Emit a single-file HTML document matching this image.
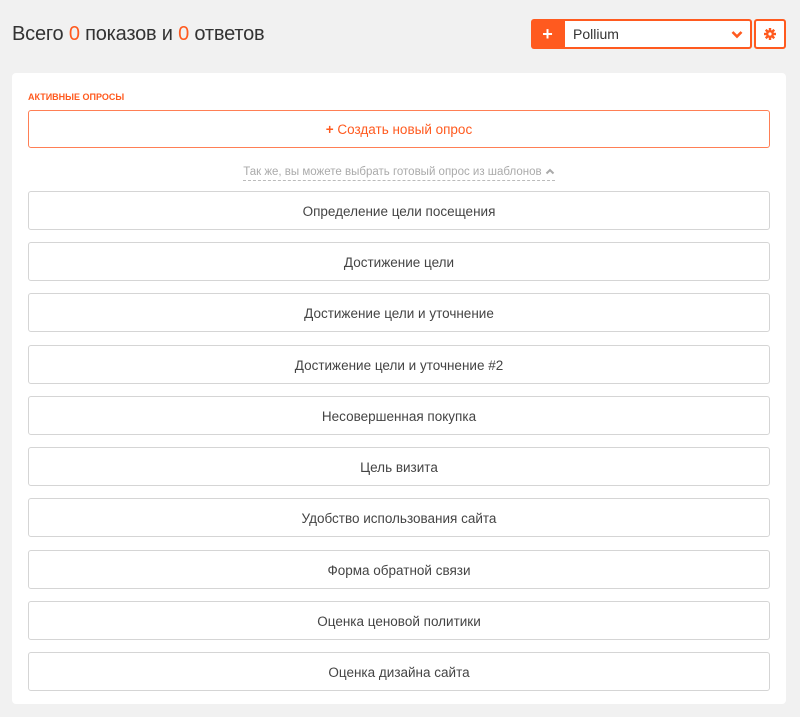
<!DOCTYPE html>
<html><head><meta charset="utf-8"><style>
*{box-sizing:border-box;margin:0;padding:0}
body{width:800px;height:717px;background:#f1f1f1;font-family:"Liberation Sans",sans-serif;position:relative;overflow:hidden;color:#333}
.title{position:absolute;left:12px;top:23px;font-size:20px;color:#333;letter-spacing:-0.2px}
.title span{color:#ff5a1f}
.plus{position:absolute;left:531px;top:19px;width:33px;height:30px;background:#ff5a1f;border-radius:3px 0 0 3px;color:#fff;font-weight:bold;font-size:18px;text-align:center;line-height:30px}
.sel{position:absolute;left:563px;top:19px;width:189px;height:30px;background:#fff;border:2px solid #ff5a1f;border-radius:0 3px 3px 0;font-size:14px;line-height:26px;padding-left:8px;color:#333}
.sel svg{position:absolute;right:7px;top:9px}
.gear{position:absolute;left:754px;top:19px;width:32px;height:30px;background:#fff;border:2px solid #ff5a1f;border-radius:3px}
.gear svg{position:absolute;left:8px;top:7px}
.panel{position:absolute;left:12px;top:73px;width:774px;height:631px;background:#fff;border-radius:4px}
.lbl{position:absolute;left:16px;top:19px;font-size:9px;font-weight:bold;color:#ff5a1f}
.create{position:absolute;left:16px;top:37px;width:742px;height:38px;border:1px solid #ff7f55;border-radius:3px;text-align:center;line-height:37px;color:#ff5a1f;font-size:13.5px}
.hint{position:absolute;left:0;width:774px;top:93px;text-align:center;font-size:11.5px;color:#aaa}
.hint span{border-bottom:1px dashed #bbb;padding-bottom:2px}
.item{position:absolute;left:16px;width:742px;height:39px;border:1px solid #d5d5d5;border-radius:3px;text-align:center;line-height:39px;font-size:13.5px;color:#444}
</style></head><body>
<div class="title">Всего <span>0</span> показов и <span>0</span> ответов</div>
<div class="plus">+</div>
<div class="sel">Pollium<svg width="12" height="9" viewBox="0 0 12 9"><path d="M1.5 2 L6 6.5 L10.5 2" stroke="#ff5a1f" stroke-width="2.6" fill="none"/></svg></div>
<div class="gear"><svg width="12" height="12" viewBox="0 0 12 12"><g fill="#ff5a1f"><circle cx="6" cy="6" r="4"/><rect x="4.8" y="0" width="2.4" height="12"/><rect x="0" y="4.8" width="12" height="2.4"/><rect x="4.8" y="0" width="2.4" height="12" transform="rotate(45 6 6)"/><rect x="4.8" y="0" width="2.4" height="12" transform="rotate(-45 6 6)"/></g><circle cx="6" cy="6" r="1.6" fill="#fff"/></svg></div>
<div class="panel">
<div class="lbl">АКТИВНЫЕ ОПРОСЫ</div>
<div class="create"><b>+</b> Создать новый опрос</div>
<div class="hint"><span>Так же, вы можете выбрать готовый опрос из шаблонов <svg width="10" height="7" viewBox="0 0 10 7"><path d="M1.5 5.5 L5 2 L8.5 5.5" stroke="#aaa" stroke-width="2" fill="none"/></svg></span></div>
<div class="item" style="top:118px">Определение цели посещения</div>
<div class="item" style="top:169px">Достижение цели</div>
<div class="item" style="top:220px">Достижение цели и уточнение</div>
<div class="item" style="top:272px">Достижение цели и уточнение #2</div>
<div class="item" style="top:323px">Несовершенная покупка</div>
<div class="item" style="top:374px">Цель визита</div>
<div class="item" style="top:425px">Удобство использования сайта</div>
<div class="item" style="top:477px">Форма обратной связи</div>
<div class="item" style="top:528px">Оценка ценовой политики</div>
<div class="item" style="top:579px">Оценка дизайна сайта</div>
</div>
</body></html>
